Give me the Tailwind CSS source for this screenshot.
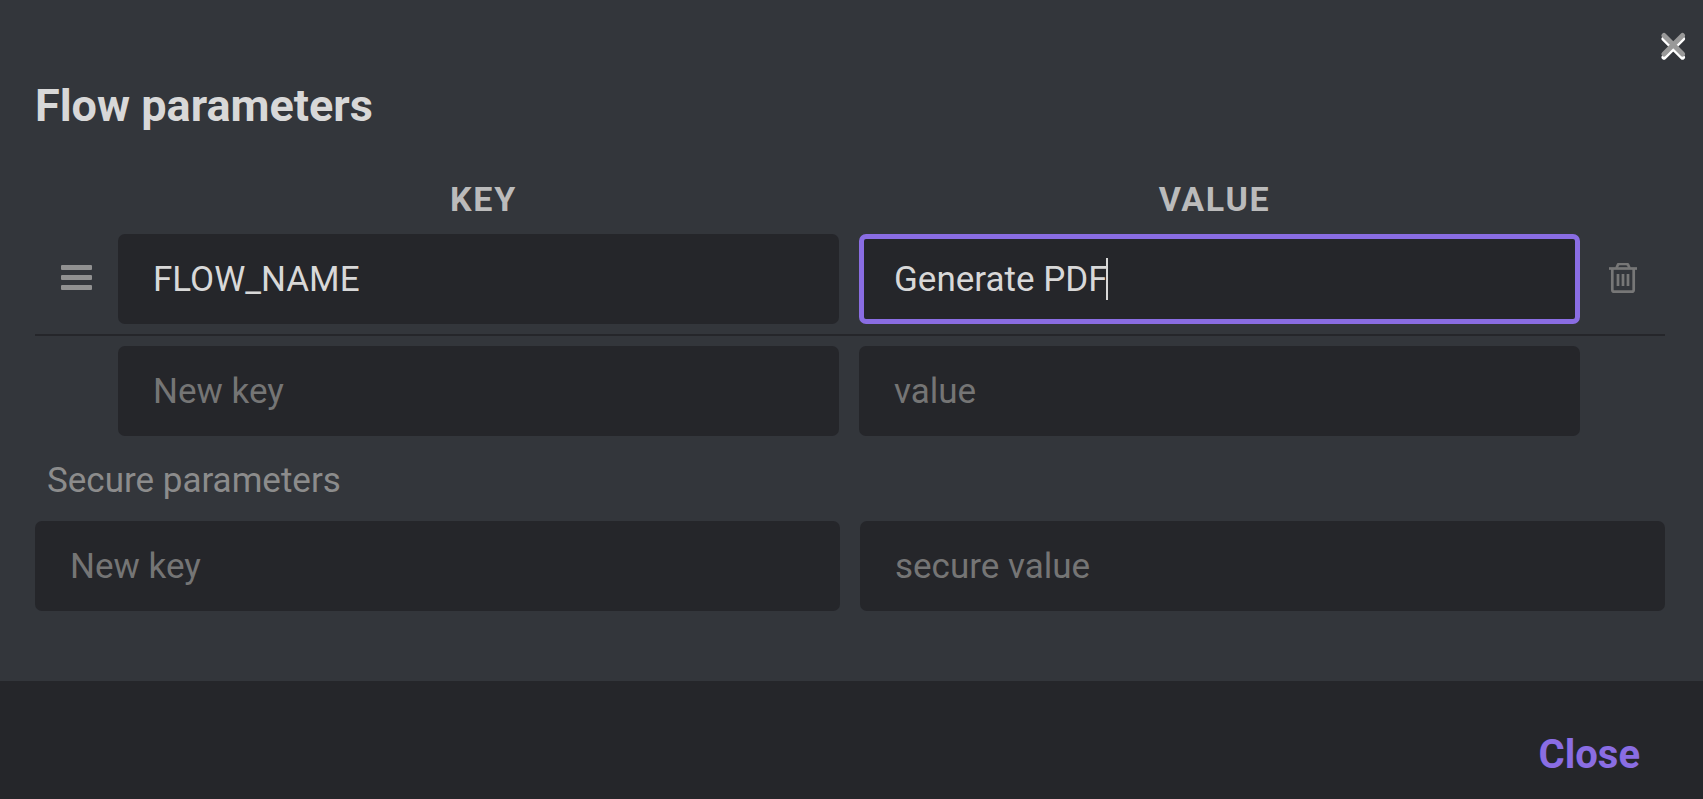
<!DOCTYPE html>
<html lang="en">
<head>
    <meta charset="UTF-8">
    <meta name="viewport" content="width=device-width, initial-scale=1.0">
    <title>Flow parameters</title>
    <script src="https://cdn.jsdelivr.net/npm/@tailwindcss/browser@4"></script>
</head>
<body class="bg-[#33363b] font-['Roboto',sans-serif] text-[35px] leading-[41px] text-[#d8d8d8]">

    <div role="dialog" aria-labelledby="title" class="relative flex flex-col min-h-screen">

        <button type="button" aria-label="Close dialog" class="absolute top-8 right-4">
            <svg class="w-7 h-7" viewBox="0 0 28 28" fill="none" stroke-width="5" stroke-linecap="round">
                <path d="M5 6.700 L23.500 25.200 M23.500 6.700 L5 25.200" stroke="#ffffff"/>
                <path d="M5 3.500 L23.500 22 M23.500 3.500 L5 22" stroke="#999999"/>
            </svg>
        </button>

        <main class="grow pl-[35px] pt-[79px] pr-[38px]">
            <h1 id="title" class="text-[45px] leading-[53px] font-bold">Flow parameters</h1>

            <!-- Plain parameters -->
            <section>
                <div class="grid grid-cols-2 pl-[83px] pr-[85px] mt-[47px] text-center text-[34px] leading-[40px] font-bold tracking-wider text-[#bbbbbb]">
                    <div id="key">KEY</div>
                    <div id="value">VALUE</div>
                </div>

                <div class="flex items-center mt-[15px] pb-[10px] border-b-2 border-[#25262a]">
                    <button type="button" aria-label="Reorder" class="w-[83px] shrink-0 pl-[26px]">
                        <svg class="w-8 h-8" viewBox="0 0 32 32" fill="#919191">
                            <rect x="0" y="2" width="31" height="5" rx="1"/>
                            <rect x="0" y="12" width="31" height="5" rx="1"/>
                            <rect x="0" y="22" width="31" height="5" rx="1"/>
                        </svg>
                    </button>
                    <div class="grow grid grid-cols-2 gap-5">
                        <input type="text" aria-labelledby="key" value="FLOW_NAME" class="w-full h-[90px] px-[35px] rounded-[7px] bg-[#25262a] outline-none">
                        <div class="relative">
                            <input type="text" aria-labelledby="value" value="Generate PDF" class="w-full h-[90px] px-[30px] rounded-[7px] bg-[#25262a] border-5 border-[#8a6de3] outline-none">
                            <!-- text cursor -->
                            <span class="absolute left-[247px] top-6 w-[2px] h-[42px] bg-[#d8d8d8]"></span>
                        </div>
                    </div>
                    <button type="button" aria-label="Delete" class="w-[85px] shrink-0 pl-[28px]">
                        <svg class="w-8 h-8" viewBox="0 0 32 32" fill="none" stroke="#777777" stroke-width="2.7">
                            <path d="M1 5.500 H29"/>
                            <path d="M8.500 5 L9.800 2 Q10.300 0.800 12 0.800 H18 Q19.500 0.800 20.200 2 L21.500 5"/>
                            <path d="M4.300 5.500 V26.700 Q4.300 28.700 6.300 28.700 H23.700 Q25.700 28.700 25.700 26.700 V5.500"/>
                            <path d="M10 11 V23 M15 11 V23 M20 11 V23"/>
                        </svg>
                    </button>
                </div>

                <div class="grid grid-cols-2 gap-5 pl-[83px] pr-[85px] mt-[10px]">
                    <input type="text" aria-label="New key" placeholder="New key" class="w-full h-[90px] px-[35px] rounded-[7px] bg-[#25262a] placeholder:text-[#757575] outline-none">
                    <input type="text" aria-label="New value" placeholder="value" class="w-full h-[90px] px-[35px] rounded-[7px] bg-[#25262a] placeholder:text-[#757575] outline-none">
                </div>
            </section>

            <!-- Secure parameters -->
            <section>
                <h2 class="pl-3 mt-6 text-[#8c8c8c]">Secure parameters</h2>
                <div class="grid grid-cols-2 gap-5 mt-5">
                    <input type="text" aria-label="New secure key" placeholder="New key" class="w-full h-[90px] px-[35px] rounded-[7px] bg-[#25262a] placeholder:text-[#757575] outline-none">
                    <input type="text" aria-label="New secure value" placeholder="secure value" class="w-full h-[90px] px-[35px] rounded-[7px] bg-[#25262a] placeholder:text-[#757575] outline-none">
                </div>
            </section>
        </main>

        <footer class="flex justify-end bg-[#25262a] pt-[50px] pb-[21px] px-[63px]">
            <button type="button" class="text-[40px] leading-[47px] font-bold text-[#8a6de3]">Close</button>
        </footer>

    </div>

</body>
</html>
